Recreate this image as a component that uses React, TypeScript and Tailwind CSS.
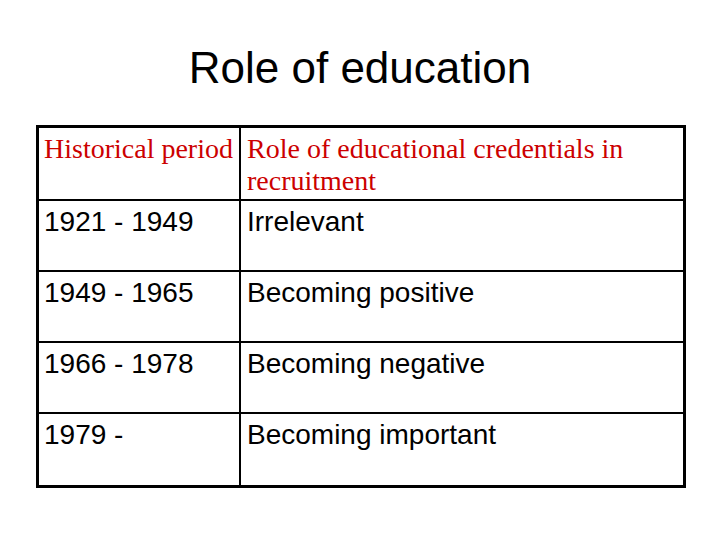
export default function App() {
  const rows = [
    ["1921 - 1949", "Irrelevant"],
    ["1949 - 1965", "Becoming positive"],
    ["1966 - 1978", "Becoming negative"],
    ["1979 -", "Becoming important"],
  ]

  return (
    <div className="w-[720px] h-[540px] bg-white overflow-hidden font-['Liberation_Sans',Arial,sans-serif]">
      {/* Title */}
      <h1 className="pt-[43px] h-[125px] text-center text-[44px] leading-[50px] text-black">Role of education</h1>

      {/* Table */}
      <div className="ml-[36px] w-[650px] border-[3px] border-black">
        <div className="flex h-[73px] border-b-2 border-black text-[#cc0000] font-['Liberation_Serif','Times_New_Roman',serif] text-[28px] leading-[32px]">
          <div className="w-[202px] shrink-0 border-r-2 border-black pl-[5px] pt-[5px]">Historical period</div>
          <div className="flex-1 pl-[6px] pt-[5px]">
            Role of educational credentials in
            <br />
            recruitment
          </div>
        </div>
        {rows.map(([period, role], i) => (
          <div
            key={period}
            className={`flex h-[71px] text-[28px] leading-[32px] text-black ${i < rows.length - 1 ? "border-b-2 border-black" : ""}`}
          >
            <div className="w-[202px] shrink-0 border-r-2 border-black pl-[5px] pt-[5px]">{period}</div>
            <div className="flex-1 pl-[6px] pt-[5px]">{role}</div>
          </div>
        ))}
      </div>
    </div>
  )
}
